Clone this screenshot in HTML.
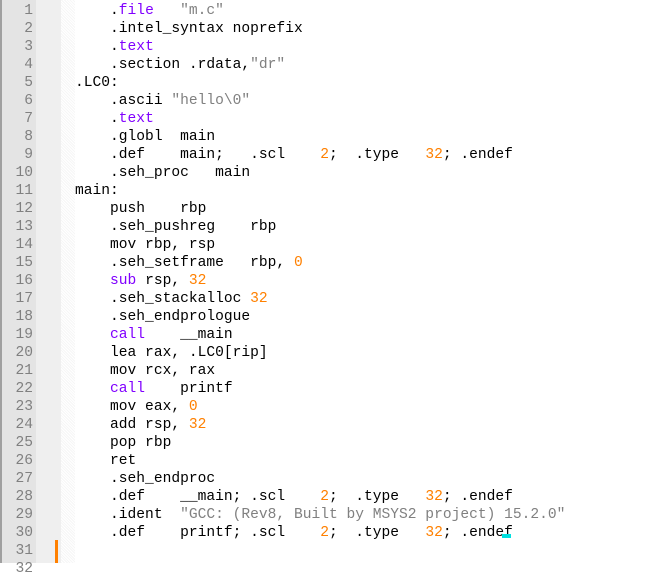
<!DOCTYPE html>
<html><head><style>
body{margin:0;width:662px;height:563px;overflow:hidden;background:#fff;position:relative;font-family:"Liberation Mono",monospace;}
#b{position:absolute;left:0;top:0;width:2px;height:563px;background:#a0a0a0}
#g{position:absolute;left:2px;top:0;width:34px;height:563px;background:#e4e4e4}
#g2{position:absolute;left:36px;top:0;width:25px;height:563px;background:#efefef}
#h{position:absolute;left:61px;top:0;width:14px;height:563px;background:repeating-linear-gradient(45deg,#f6f6f6 0 1px,#fff 1px 2px)}
#o{position:absolute;left:55px;top:540px;width:3px;height:23px;background:#ff8000}
.ln{position:absolute;left:2px;width:31px;text-align:right;color:#808080;font-size:14.6px;line-height:18px;margin-top:2px}
.c{position:absolute;left:75px;white-space:pre;font-size:14.6px;line-height:18px;color:#000;margin-top:2px}
.k{color:#8000ff}.s{color:#808080}.n{color:#ff8000}
#cur{position:absolute;left:502px;top:534px;width:9px;height:4px;background:#00e0e0}
</style></head><body>
<div id="b"></div><div id="g"></div><div id="g2"></div><div id="h"></div><div id="o"></div>
<div class="ln" style="top:0">1</div><div class="ln" style="top:18px">2</div><div class="ln" style="top:36px">3</div><div class="ln" style="top:54px">4</div><div class="ln" style="top:72px">5</div><div class="ln" style="top:90px">6</div><div class="ln" style="top:108px">7</div><div class="ln" style="top:126px">8</div><div class="ln" style="top:144px">9</div><div class="ln" style="top:162px">10</div><div class="ln" style="top:180px">11</div><div class="ln" style="top:198px">12</div><div class="ln" style="top:216px">13</div><div class="ln" style="top:234px">14</div><div class="ln" style="top:252px">15</div><div class="ln" style="top:270px">16</div><div class="ln" style="top:288px">17</div><div class="ln" style="top:306px">18</div><div class="ln" style="top:324px">19</div><div class="ln" style="top:342px">20</div><div class="ln" style="top:360px">21</div><div class="ln" style="top:378px">22</div><div class="ln" style="top:396px">23</div><div class="ln" style="top:414px">24</div><div class="ln" style="top:432px">25</div><div class="ln" style="top:450px">26</div><div class="ln" style="top:468px">27</div><div class="ln" style="top:486px">28</div><div class="ln" style="top:504px">29</div><div class="ln" style="top:522px">30</div><div class="ln" style="top:540px">31</div><div class="ln" style="top:558px">32</div>
<div class="c" style="top:0">    .<span class="k">file</span>   <span class="s">"m.c"</span>
    .intel_syntax noprefix
    .<span class="k">text</span>
    .section .rdata,<span class="s">"dr"</span>
.LC0:
    .ascii <span class="s">"hello\0"</span>
    .<span class="k">text</span>
    .globl  main
    .def    main;   .scl    <span class="n">2</span>;  .type   <span class="n">32</span>; .endef
    .seh_proc   main
main:
    push    rbp
    .seh_pushreg    rbp
    mov rbp, rsp
    .seh_setframe   rbp, <span class="n">0</span>
    <span class="k">sub</span> rsp, <span class="n">32</span>
    .seh_stackalloc <span class="n">32</span>
    .seh_endprologue
    <span class="k">call</span>    __main
    lea rax, .LC0[rip]
    mov rcx, rax
    <span class="k">call</span>    printf
    mov eax, <span class="n">0</span>
    add rsp, <span class="n">32</span>
    pop rbp
    ret
    .seh_endproc
    .def    __main; .scl    <span class="n">2</span>;  .type   <span class="n">32</span>; .endef
    .ident  <span class="s">"GCC: (Rev8, Built by MSYS2 project) 15.2.0"</span>
    .def    printf; .scl    <span class="n">2</span>;  .type   <span class="n">32</span>; .endef
</div>
<div id="cur"></div>
</body></html>
